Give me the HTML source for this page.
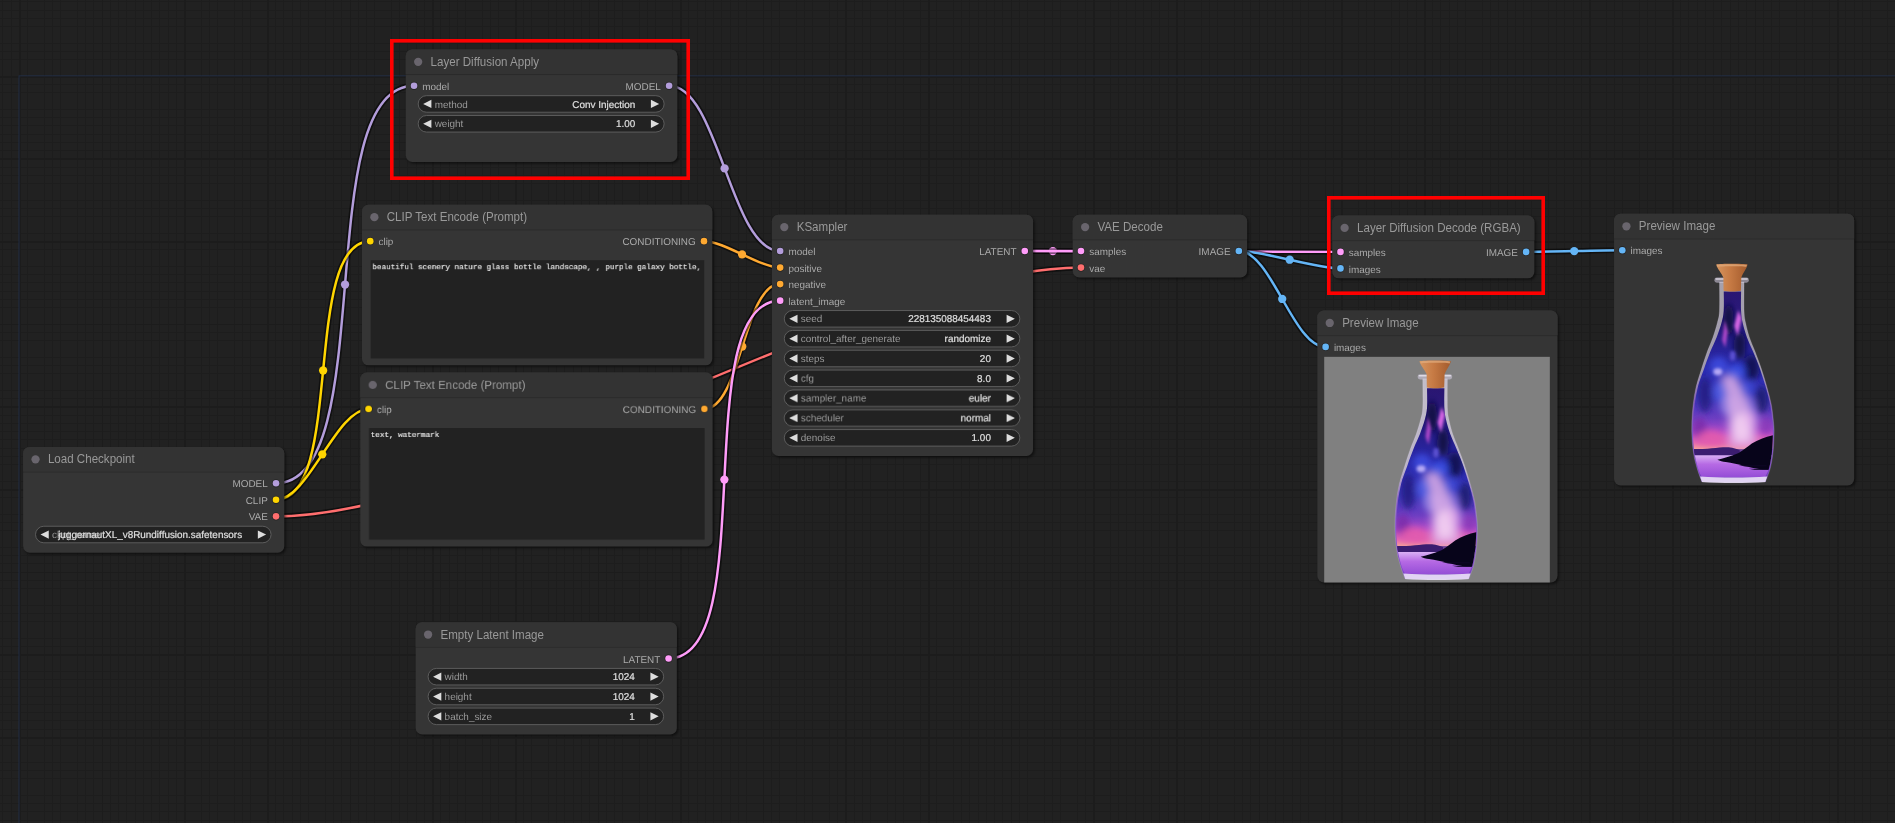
<!DOCTYPE html><html><head><meta charset="utf-8"><title>ComfyUI - Layer Diffusion workflow</title><style>
html,body{margin:0;padding:0;background:#212121}
#root{position:relative;width:1895px;height:823px;overflow:hidden;background-color:#212121;
background-image:repeating-linear-gradient(to right,transparent 0,transparent 19.0000px,#1c1c1c 19.0000px,#1c1c1c 20.6529px,transparent 20.6529px,transparent 82.64460px),repeating-linear-gradient(to bottom,transparent 0,transparent 75.8500px,#1c1c1c 75.8500px,#1c1c1c 77.5029px,transparent 77.5029px,transparent 82.64460px),repeating-linear-gradient(to right,transparent 0,transparent 2.4711px,#1d1d1d 2.4711px,#1d1d1d 3.2975px,transparent 3.2975px,transparent 8.26446px),repeating-linear-gradient(to bottom,transparent 0,transparent 1.4699px,#1d1d1d 1.4699px,#1d1d1d 2.2963px,transparent 2.2963px,transparent 8.26446px)}
svg{position:absolute;left:0;top:0;will-change:transform}
text{font-family:"Liberation Sans", Arial, sans-serif;font-size:12px;fill:#AAA;text-rendering:geometricPrecision}
text.tt{font-size:14px;fill:#999;text-rendering:auto}
text.wl{fill:#999}
text.wv{fill:#DDD;stroke:#DDD;stroke-width:.3px}
text.mono{font-family:"Liberation Mono", "DejaVu Sans Mono", monospace;font-size:9.215px;fill:#E4E4E4;stroke:#E4E4E4;stroke-width:.25px;text-rendering:auto}
.nb{fill:#353535;filter:drop-shadow(2px 2px 1.5px rgba(0,0,0,.5))}
.sd{stroke:#000;stroke-opacity:.3;stroke-width:2;paint-order:stroke}
.lb{fill:none;stroke:#000;stroke-opacity:.5;stroke-width:7}.lk{fill:none;stroke-width:3}
.ann{position:absolute;border:3px solid #f00;box-sizing:border-box}
</style></head><body><div id="root">
<svg width="1895" height="823" viewBox="0 0 1895 823">
<defs><linearGradient id="lq" gradientUnits="userSpaceOnUse" x1="0" y1="31" x2="0" y2="222">
<stop offset="0" stop-color="#2a1672"/><stop offset=".2" stop-color="#261a80"/><stop offset=".40" stop-color="#2a2aae"/>
<stop offset=".56" stop-color="#3a36bb"/><stop offset=".67" stop-color="#6e3ec2"/><stop offset=".75" stop-color="#b84cc8"/>
<stop offset=".795" stop-color="#ea6cae"/><stop offset=".829" stop-color="#f6a098"/><stop offset=".832" stop-color="#3a1c6c"/>
<stop offset=".858" stop-color="#4c2c90"/><stop offset=".863" stop-color="#d8aef4"/><stop offset=".91" stop-color="#b66ae4"/>
<stop offset="1" stop-color="#8a44d2"/></linearGradient>
<linearGradient id="ck" gradientUnits="userSpaceOnUse" x1="95" y1="0" x2="127" y2="0">
<stop offset="0" stop-color="#d69660"/><stop offset=".45" stop-color="#c67a44"/><stop offset="1" stop-color="#a25a2c"/></linearGradient>
<linearGradient id="gl" gradientUnits="userSpaceOnUse" x1="0" y1="20" x2="0" y2="222">
<stop offset="0" stop-color="#ebe4f6" stop-opacity=".62"/><stop offset=".45" stop-color="#e0d4f6" stop-opacity=".62"/>
<stop offset=".6" stop-color="#8a5ad0" stop-opacity=".85"/><stop offset="1" stop-color="#7a40c8" stop-opacity=".95"/></linearGradient>
<filter id="b2" x="-50%" y="-50%" width="200%" height="200%"><feGaussianBlur stdDeviation="1.6"/></filter>
<filter id="b3" x="-50%" y="-50%" width="200%" height="200%"><feGaussianBlur stdDeviation="3"/></filter>
<filter id="b5" x="-50%" y="-50%" width="200%" height="200%"><feGaussianBlur stdDeviation="4.5"/></filter>
<clipPath id="bc"><path d="M103 31.5C103 34.8 103.4 45.9 103 51.1C102.6 56.3 102 58.4 100.8 62.8C99.6 67.2 97.7 72.5 95.9 77.4C94 82.3 91.6 86.7 89.5 92C87.4 97.3 85.1 103.7 83.1 109.5C81 115.3 78.6 121.2 77.1 127C75.6 132.8 74.7 138.6 73.9 144.4C73.1 150.2 72.6 156.2 72.3 162C72.1 167.8 72 173.6 72.3 179.4C72.7 185.2 73.3 191.7 74.3 197C75.3 202.3 76.9 208.1 78.1 211.5C79.2 214.9 80.7 216.6 81.2 217.6L144.5 217.6C145.2 216.1 147.3 213 148.5 208.6C149.7 204.2 150.8 196.9 151.4 191.1C152 185.3 152.2 178.4 152.3 173.6C152.4 168.8 152.2 166.9 151.7 162C151.2 157.1 150.5 150.2 149.4 144.4C148.3 138.6 146.7 132.8 145 127C143.3 121.2 141.5 115.3 139.4 109.5C137.3 103.7 134.7 97.3 132.5 92C130.3 86.7 128 82.3 126.2 77.4C124.5 72.5 123 67.2 122 62.8C121 58.4 120.7 56.3 120.4 51.1C120.1 45.9 120.4 34.8 120.4 31.5Z"/></clipPath>
<g id="bottle">
<path d="M98.7 22C98.7 26.9 99.1 44.3 98.7 51.1C98.3 57.9 97.7 58.4 96.6 62.8C95.5 67.2 93.9 72.5 92.2 77.4C90.5 82.3 88.3 86.7 86.4 92C84.5 97.3 82.4 103.7 80.6 109.5C78.8 115.3 76.7 121.2 75.3 127C73.9 132.8 73.1 138.6 72.4 144.4C71.7 150.2 71.2 156.2 71 162C70.8 167.8 70.8 173.6 71.2 179.4C71.6 185.2 72.3 191.7 73.3 197C74.3 202.3 75.8 207.2 77.1 211.5C78.4 215.8 80.5 220.8 81.2 222.6L144.7 222.6C145.5 220.3 148.4 213.8 149.7 208.6C151 203.3 152 196.9 152.6 191.1C153.2 185.3 153.4 178.4 153.5 173.6C153.6 168.8 153.4 166.9 152.9 162C152.4 157.1 151.7 150.2 150.6 144.4C149.5 138.6 147.8 132.8 146.2 127C144.6 121.2 142.8 115.3 140.9 109.5C139 103.7 136.5 97.3 134.5 92C132.5 86.7 130.3 82.3 128.7 77.4C127.1 72.5 125.8 67.2 124.9 62.8C124 58.4 123.7 57.9 123.4 51.1C123.2 44.3 123.4 26.9 123.4 22Z" fill="url(#gl)" stroke="#efe8fa" stroke-opacity=".3" stroke-width=".6"/>
<rect x="93.6" y="17.4" width="34.6" height="5.2" rx="2.4" fill="#d4cce2" fill-opacity=".55"/>
<rect x="94.6" y="18.2" width="32.6" height="1.5" rx=".7" fill="#f2eef8" fill-opacity=".7"/>
<g clip-path="url(#bc)">
<rect x="60" y="28" width="110" height="196" fill="url(#lq)"/>
<g filter="url(#b3)">
<ellipse cx="108" cy="60" rx="5" ry="16" fill="#0d0a3a" fill-opacity=".9"/>
<ellipse cx="119" cy="86" rx="6" ry="14" fill="#0d0a3a" fill-opacity=".85"/>
<ellipse cx="131" cy="108" rx="8" ry="13" fill="#120e48" fill-opacity=".85"/>
<ellipse cx="141" cy="140" rx="7" ry="14" fill="#1c1668" fill-opacity=".8"/>
<ellipse cx="84" cy="135" rx="7" ry="18" fill="#221a7c" fill-opacity=".8"/>
<ellipse cx="98" cy="106" rx="9" ry="9" fill="#3a46d8"/>
<ellipse cx="116" cy="112" rx="9" ry="8" fill="#3448dc"/>
<ellipse cx="126" cy="128" rx="8" ry="8" fill="#3a44d0"/>
<ellipse cx="100" cy="132" rx="8" ry="10" fill="#4a54dc"/>
<ellipse cx="79" cy="170" rx="7" ry="12" fill="#7a2aa8" fill-opacity=".85"/>
<ellipse cx="90" cy="179" rx="14" ry="8" fill="#e85aa8" fill-opacity=".85"/>
<ellipse cx="145" cy="166" rx="7" ry="9" fill="#8a3ab8" fill-opacity=".8"/>
<ellipse cx="112" cy="181" rx="42" ry="7" fill="#dc5cb4" fill-opacity=".6"/>
<ellipse cx="108" cy="146" rx="10" ry="9" fill="#8c7ee4" fill-opacity=".7"/>
<ellipse cx="128" cy="146" rx="8" ry="10" fill="#7a68d8" fill-opacity=".6"/>
</g>
<g filter="url(#b2)">
<path d="M112 38L117.5 50L113.5 66L117 76L121 58Z" fill="#d866e6"/>
<path d="M104 60L107 72L104.5 88L101.5 80Z" fill="#b048cc"/>
<ellipse cx="97" cy="112" rx="4.5" ry="3.5" fill="#b4a8f6"/>
<ellipse cx="112" cy="96" rx="3" ry="5" fill="#5a50d0"/>
</g>
<g filter="url(#b5)">
<path d="M99 116C104 130 108 146 108 188H136C137 162 128 138 114 114Z" fill="#dcaee8" fill-opacity=".85"/>
<ellipse cx="121" cy="168" rx="9" ry="15" fill="#f6d2f2" fill-opacity=".85"/>
<ellipse cx="131" cy="160" rx="6" ry="9" fill="#e0a8ea" fill-opacity=".8"/>
</g>
<path d="M72 190C88 189.6 100 187.2 108 187.8C113 188.2 116 189.6 119 190.6V195.6H72Z" fill="#3b1d70"/>
<path d="M96.6 200.2C102 198.8 109 197 118 193.4C123.4 190 127.4 187 131.2 184C137.4 180 144.6 177.4 153 175.4V208.8C148 210.4 144 210.3 140 209.8C134 208.8 128 207.8 124 206.6C118 204.8 111 203.5 105 202.5C102 202 99 201.4 96.6 200.2Z" fill="#07041a"/>
<path d="M118 205.5H146V207H124ZM128 209.2H150V210.6H134Z" fill="#0d0624" fill-opacity=".85"/>
</g>
<path d="M79.3 217C100 218.4 126 218.4 146.6 217L144.7 222.6C126 224 100 224 81.2 222.6Z" fill="#e9e0f6" fill-opacity=".92"/>
<path d="M95.4 4.4C100 3.4 122 3.4 127 4.4C126 9 122 13 120.6 17.5L120.2 30.6C116 31.6 107 31.6 102.8 30.6L102.6 17.5C101 13 96.5 9 95.4 4.4Z" fill="url(#ck)"/>
<path d="M96 4.6C102 3.8 120 3.8 126.4 4.6L125.6 6.6C120 5.8 102 5.8 96.8 6.6Z" fill="#e0a878" fill-opacity=".8"/>
</g>
</defs>
<g transform="translate(19 75.85) scale(0.826446)">
<rect x="0" y="0" width="2342.95" height="1045.83" fill="none" stroke="#235" stroke-opacity=".8" stroke-width="1"/>
<path class="lb" d="M311 493C438.29 493 350.71 12 478 12"/><path class="lk" d="M311 493C438.29 493 350.71 12 478 12" stroke="#B39DDB"/><circle cx="394.5" cy="252.5" r="5" fill="#B39DDB"/><path class="lb" d="M311 513C394.28 513 341.72 200 425 200"/><path class="lk" d="M311 513C394.28 513 341.72 200 425 200" stroke="#FFD500"/><circle cx="368" cy="356.5" r="5" fill="#FFD500"/><path class="lb" d="M311 513C350.25 513 383.75 403 423 403"/><path class="lk" d="M311 513C350.25 513 383.75 403 423 403" stroke="#FFD500"/><circle cx="367" cy="458" r="5" fill="#FFD500"/><path class="lb" d="M311 533C565.86 533 1030.14 232 1285 232"/><path class="lk" d="M311 533C565.86 533 1030.14 232 1285 232" stroke="#FF6E6E"/><circle cx="798" cy="382.5" r="5" fill="#FF6E6E"/><path class="lb" d="M786.6 12C846.84 12 860.76 212 921 212"/><path class="lk" d="M786.6 12C846.84 12 860.76 212 921 212" stroke="#B39DDB"/><circle cx="853.8" cy="112" r="5" fill="#B39DDB"/><path class="lb" d="M828.85 200C853.24 200 896.61 232 921 232"/><path class="lk" d="M828.85 200C853.24 200 896.61 232 921 232" stroke="#FFA931"/><circle cx="874.92" cy="216" r="5" fill="#FFA931"/><path class="lb" d="M829.28 403C873.45 403 876.83 252 921 252"/><path class="lk" d="M829.28 403C873.45 403 876.83 252 921 252" stroke="#FFA931"/><circle cx="875.14" cy="327.5" r="5" fill="#FFA931"/><path class="lb" d="M786 705C899.39 705 807.61 272 921 272"/><path class="lk" d="M786 705C899.39 705 807.61 272 921 272" stroke="#FF9CF9"/><circle cx="853.5" cy="488.5" r="5" fill="#FF9CF9"/><path class="lb" d="M1217 212C1234 212 1268 212 1285 212"/><path class="lk" d="M1217 212C1234 212 1268 212 1285 212" stroke="#FF9CF9"/><circle cx="1251" cy="212" r="5" fill="#FF9CF9"/><path class="lb" d="M1217 212C1312.5 212 1503.5 213 1599 213"/><path class="lk" d="M1217 212C1312.5 212 1503.5 213 1599 213" stroke="#FF9CF9"/><circle cx="1408" cy="212.5" r="5" fill="#FF9CF9"/><path class="lb" d="M1476 212C1507.19 212 1567.81 233 1599 233"/><path class="lk" d="M1476 212C1507.19 212 1567.81 233 1599 233" stroke="#64B5F6"/><circle cx="1537.5" cy="222.5" r="5" fill="#64B5F6"/><path class="lb" d="M1476 212C1515.12 212 1541.88 328 1581 328"/><path class="lk" d="M1476 212C1515.12 212 1541.88 328 1581 328" stroke="#64B5F6"/><circle cx="1528.5" cy="270" r="5" fill="#64B5F6"/><path class="lb" d="M1823.6 213C1852.7 213 1910.9 211 1940 211"/><path class="lk" d="M1823.6 213C1852.7 213 1910.9 211 1940 211" stroke="#64B5F6"/><circle cx="1881.8" cy="212" r="5" fill="#64B5F6"/>
<g transform="translate(5 479)"><rect class="nb" x="0" y="-30" width="316" height="128" rx="8"/><path d="M0 0V-22a8 8 0 0 1 8 -8H308a8 8 0 0 1 8 8V0Z" fill="#333"/><rect x="0" y="0" width="316" height="1" fill="#000" fill-opacity=".2"/><circle cx="15" cy="-15" r="5" fill="#69656d"/><text class="tt" transform="translate(30 -10) scale(1 1.1)">Load Checkpoint</text><circle class="sd" cx="306" cy="14" r="4" fill="#B39DDB"/><text transform="translate(296 19) scale(1 1)" text-anchor="end">MODEL</text><circle class="sd" cx="306" cy="34" r="4" fill="#FFD500"/><text transform="translate(296 39) scale(1 1)" text-anchor="end">CLIP</text><circle class="sd" cx="306" cy="54" r="4" fill="#FF6E6E"/><text transform="translate(296 59) scale(1 1)" text-anchor="end">VAE</text><rect x="15" y="66" width="285" height="20" rx="10" fill="#222" stroke="#666"/><path d="M31 71L21 76L31 81ZM284 71L294 76L284 81Z" fill="#DDD"/><text class="wl" transform="translate(35 80.3) scale(1 1)">ckpt_name</text><text class="wv" transform="translate(265 80.3) scale(1 1)" text-anchor="end">juggernautXL_v8Rundiffusion.safetensors</text></g>
<g transform="translate(468 -2)"><rect class="nb" x="0" y="-30" width="328.6" height="136.1" rx="8"/><path d="M0 0V-22a8 8 0 0 1 8 -8H320.6a8 8 0 0 1 8 8V0Z" fill="#333"/><rect x="0" y="0" width="328.6" height="1" fill="#000" fill-opacity=".2"/><circle cx="15" cy="-15" r="5" fill="#69656d"/><text class="tt" transform="translate(30 -10) scale(1 1.1)">Layer Diffusion Apply</text><circle class="sd" cx="10" cy="14" r="4" fill="#B39DDB"/><text transform="translate(20 19) scale(1 1)">model</text><circle class="sd" cx="318.6" cy="14" r="4" fill="#B39DDB"/><text transform="translate(308.6 19) scale(1 1)" text-anchor="end">MODEL</text><rect x="15" y="26" width="297.6" height="20" rx="10" fill="#222" stroke="#666"/><path d="M31 31L21 36L31 41ZM296.6 31L306.6 36L296.6 41Z" fill="#DDD"/><text class="wl" transform="translate(35 40.3) scale(1 1)">method</text><text class="wv" transform="translate(277.6 40.3) scale(1 1)" text-anchor="end">Conv Injection</text><rect x="15" y="50" width="297.6" height="20" rx="10" fill="#222" stroke="#666"/><path d="M31 55L21 60L31 65ZM296.6 55L306.6 60L296.6 65Z" fill="#DDD"/><text class="wl" transform="translate(35 64.3) scale(1 1)">weight</text><text class="wv" transform="translate(277.6 64.3) scale(1 1)" text-anchor="end">1.00</text></g>
<g transform="translate(415 186)"><rect class="nb" x="0" y="-30" width="423.85" height="194.31" rx="8"/><path d="M0 0V-22a8 8 0 0 1 8 -8H415.85a8 8 0 0 1 8 8V0Z" fill="#333"/><rect x="0" y="0" width="423.85" height="1" fill="#000" fill-opacity=".2"/><circle cx="15" cy="-15" r="5" fill="#69656d"/><text class="tt" transform="translate(30 -10) scale(1 1.1)">CLIP Text Encode (Prompt)</text><circle class="sd" cx="10" cy="14" r="4" fill="#FFD500"/><text transform="translate(20 19) scale(1 1)">clip</text><circle class="sd" cx="413.85" cy="14" r="4" fill="#FFA931"/><text transform="translate(403.85 19) scale(1 1)" text-anchor="end">CONDITIONING</text><rect x="10.6" y="37.1" width="403.55" height="118.71" fill="#222"/><text class="mono" x="12.6" y="48.3">beautiful scenery nature glass bottle landscape, , purple galaxy bottle,</text></g>
<g transform="translate(413 389)"><rect class="nb" x="0" y="-30" width="426.28" height="210.61" rx="8"/><path d="M0 0V-22a8 8 0 0 1 8 -8H418.28a8 8 0 0 1 8 8V0Z" fill="#333"/><rect x="0" y="0" width="426.28" height="1" fill="#000" fill-opacity=".2"/><circle cx="15" cy="-15" r="5" fill="#69656d"/><text class="tt" transform="translate(30 -10) scale(1 1.1)">CLIP Text Encode (Prompt)</text><circle class="sd" cx="10" cy="14" r="4" fill="#FFD500"/><text transform="translate(20 19) scale(1 1)">clip</text><circle class="sd" cx="416.28" cy="14" r="4" fill="#FFA931"/><text transform="translate(406.28 19) scale(1 1)" text-anchor="end">CONDITIONING</text><rect x="10.6" y="37.1" width="405.98" height="135.01" fill="#222"/><text class="mono" x="12.6" y="48.3">text, watermark</text></g>
<g transform="translate(911 198)"><rect class="nb" x="0" y="-30" width="316" height="292" rx="8"/><path d="M0 0V-22a8 8 0 0 1 8 -8H308a8 8 0 0 1 8 8V0Z" fill="#333"/><rect x="0" y="0" width="316" height="1" fill="#000" fill-opacity=".2"/><circle cx="15" cy="-15" r="5" fill="#69656d"/><text class="tt" transform="translate(30 -10) scale(1 1.1)">KSampler</text><circle class="sd" cx="10" cy="14" r="4" fill="#B39DDB"/><text transform="translate(20 19) scale(1 1)">model</text><circle class="sd" cx="10" cy="34" r="4" fill="#FFA931"/><text transform="translate(20 39) scale(1 1)">positive</text><circle class="sd" cx="10" cy="54" r="4" fill="#FFA931"/><text transform="translate(20 59) scale(1 1)">negative</text><circle class="sd" cx="10" cy="74" r="4" fill="#FF9CF9"/><text transform="translate(20 79) scale(1 1)">latent_image</text><circle class="sd" cx="306" cy="14" r="4" fill="#FF9CF9"/><text transform="translate(296 19) scale(1 1)" text-anchor="end">LATENT</text><rect x="15" y="86" width="285" height="20" rx="10" fill="#222" stroke="#666"/><path d="M31 91L21 96L31 101ZM284 91L294 96L284 101Z" fill="#DDD"/><text class="wl" transform="translate(35 100.3) scale(1 1)">seed</text><text class="wv" transform="translate(265 100.3) scale(1 1)" text-anchor="end">228135088454483</text><rect x="15" y="110" width="285" height="20" rx="10" fill="#222" stroke="#666"/><path d="M31 115L21 120L31 125ZM284 115L294 120L284 125Z" fill="#DDD"/><text class="wl" transform="translate(35 124.3) scale(1 1)">control_after_generate</text><text class="wv" transform="translate(265 124.3) scale(1 1)" text-anchor="end">randomize</text><rect x="15" y="134" width="285" height="20" rx="10" fill="#222" stroke="#666"/><path d="M31 139L21 144L31 149ZM284 139L294 144L284 149Z" fill="#DDD"/><text class="wl" transform="translate(35 148.3) scale(1 1)">steps</text><text class="wv" transform="translate(265 148.3) scale(1 1)" text-anchor="end">20</text><rect x="15" y="158" width="285" height="20" rx="10" fill="#222" stroke="#666"/><path d="M31 163L21 168L31 173ZM284 163L294 168L284 173Z" fill="#DDD"/><text class="wl" transform="translate(35 172.3) scale(1 1)">cfg</text><text class="wv" transform="translate(265 172.3) scale(1 1)" text-anchor="end">8.0</text><rect x="15" y="182" width="285" height="20" rx="10" fill="#222" stroke="#666"/><path d="M31 187L21 192L31 197ZM284 187L294 192L284 197Z" fill="#DDD"/><text class="wl" transform="translate(35 196.3) scale(1 1)">sampler_name</text><text class="wv" transform="translate(265 196.3) scale(1 1)" text-anchor="end">euler</text><rect x="15" y="206" width="285" height="20" rx="10" fill="#222" stroke="#666"/><path d="M31 211L21 216L31 221ZM284 211L294 216L284 221Z" fill="#DDD"/><text class="wl" transform="translate(35 220.3) scale(1 1)">scheduler</text><text class="wv" transform="translate(265 220.3) scale(1 1)" text-anchor="end">normal</text><rect x="15" y="230" width="285" height="20" rx="10" fill="#222" stroke="#666"/><path d="M31 235L21 240L31 245ZM284 235L294 240L284 245Z" fill="#DDD"/><text class="wl" transform="translate(35 244.3) scale(1 1)">denoise</text><text class="wv" transform="translate(265 244.3) scale(1 1)" text-anchor="end">1.00</text></g>
<g transform="translate(1275 198)"><rect class="nb" x="0" y="-30" width="211" height="76" rx="8"/><path d="M0 0V-22a8 8 0 0 1 8 -8H203a8 8 0 0 1 8 8V0Z" fill="#333"/><rect x="0" y="0" width="211" height="1" fill="#000" fill-opacity=".2"/><circle cx="15" cy="-15" r="5" fill="#69656d"/><text class="tt" transform="translate(30 -10) scale(1 1.1)">VAE Decode</text><circle class="sd" cx="10" cy="14" r="4" fill="#FF9CF9"/><text transform="translate(20 19) scale(1 1)">samples</text><circle class="sd" cx="10" cy="34" r="4" fill="#FF6E6E"/><text transform="translate(20 39) scale(1 1)">vae</text><circle class="sd" cx="201" cy="14" r="4" fill="#64B5F6"/><text transform="translate(191 19) scale(1 1)" text-anchor="end">IMAGE</text></g>
<g transform="translate(1589 199)"><rect class="nb" x="0" y="-30" width="244.6" height="76" rx="8"/><path d="M0 0V-22a8 8 0 0 1 8 -8H236.6a8 8 0 0 1 8 8V0Z" fill="#333"/><rect x="0" y="0" width="244.6" height="1" fill="#000" fill-opacity=".2"/><circle cx="15" cy="-15" r="5" fill="#69656d"/><text class="tt" transform="translate(30 -10) scale(1 1.1)">Layer Diffusion Decode (RGBA)</text><circle class="sd" cx="10" cy="14" r="4" fill="#FF9CF9"/><text transform="translate(20 19) scale(1 1)">samples</text><circle class="sd" cx="10" cy="34" r="4" fill="#64B5F6"/><text transform="translate(20 39) scale(1 1)">images</text><circle class="sd" cx="234.6" cy="14" r="4" fill="#64B5F6"/><text transform="translate(224.6 19) scale(1 1)" text-anchor="end">IMAGE</text></g>
<g transform="translate(1571 314)"><rect class="nb" x="0" y="-30" width="290.6" height="329" rx="8"/><path d="M0 0V-22a8 8 0 0 1 8 -8H282.6a8 8 0 0 1 8 8V0Z" fill="#333"/><rect x="0" y="0" width="290.6" height="1" fill="#000" fill-opacity=".2"/><circle cx="15" cy="-15" r="5" fill="#69656d"/><text class="tt" transform="translate(30 -10) scale(1 1.1)">Preview Image</text><circle class="sd" cx="10" cy="14" r="4" fill="#64B5F6"/><text transform="translate(20 19) scale(1 1)">images</text><g transform="translate(8.3 26) scale(1.20796)"><rect width="226" height="226" fill="#808080"/><use href="#bottle"/></g></g>
<g transform="translate(1930 197)"><rect class="nb" x="0" y="-30" width="290.6" height="328.6" rx="8"/><path d="M0 0V-22a8 8 0 0 1 8 -8H282.6a8 8 0 0 1 8 8V0Z" fill="#333"/><rect x="0" y="0" width="290.6" height="1" fill="#000" fill-opacity=".2"/><circle cx="15" cy="-15" r="5" fill="#69656d"/><text class="tt" transform="translate(30 -10) scale(1 1.1)">Preview Image</text><circle class="sd" cx="10" cy="14" r="4" fill="#64B5F6"/><text transform="translate(20 19) scale(1 1)">images</text><g transform="translate(8.5 26) scale(1.20619)"><use href="#bottle"/></g></g>
<g transform="translate(480 691)"><rect class="nb" x="0" y="-30" width="316" height="136" rx="8"/><path d="M0 0V-22a8 8 0 0 1 8 -8H308a8 8 0 0 1 8 8V0Z" fill="#333"/><rect x="0" y="0" width="316" height="1" fill="#000" fill-opacity=".2"/><circle cx="15" cy="-15" r="5" fill="#69656d"/><text class="tt" transform="translate(30 -10) scale(1 1.1)">Empty Latent Image</text><circle class="sd" cx="306" cy="14" r="4" fill="#FF9CF9"/><text transform="translate(296 19) scale(1 1)" text-anchor="end">LATENT</text><rect x="15" y="26" width="285" height="20" rx="10" fill="#222" stroke="#666"/><path d="M31 31L21 36L31 41ZM284 31L294 36L284 41Z" fill="#DDD"/><text class="wl" transform="translate(35 40.3) scale(1 1)">width</text><text class="wv" transform="translate(265 40.3) scale(1 1)" text-anchor="end">1024</text><rect x="15" y="50" width="285" height="20" rx="10" fill="#222" stroke="#666"/><path d="M31 55L21 60L31 65ZM284 55L294 60L284 65Z" fill="#DDD"/><text class="wl" transform="translate(35 64.3) scale(1 1)">height</text><text class="wv" transform="translate(265 64.3) scale(1 1)" text-anchor="end">1024</text><rect x="15" y="74" width="285" height="20" rx="10" fill="#222" stroke="#666"/><path d="M31 79L21 84L31 89ZM284 79L294 84L284 89Z" fill="#DDD"/><text class="wl" transform="translate(35 88.3) scale(1 1)">batch_size</text><text class="wv" transform="translate(265 88.3) scale(1 1)" text-anchor="end">1</text></g>
</g></svg>
<svg width="1895" height="823" viewBox="0 0 1895 823" fill="none" stroke="#f00" stroke-width="3.6">
<rect x="391.8" y="40.8" width="296.4" height="137.4"/>
<rect x="1328.8" y="197.8" width="214.4" height="95.4"/>
</svg>
</div></body></html>
